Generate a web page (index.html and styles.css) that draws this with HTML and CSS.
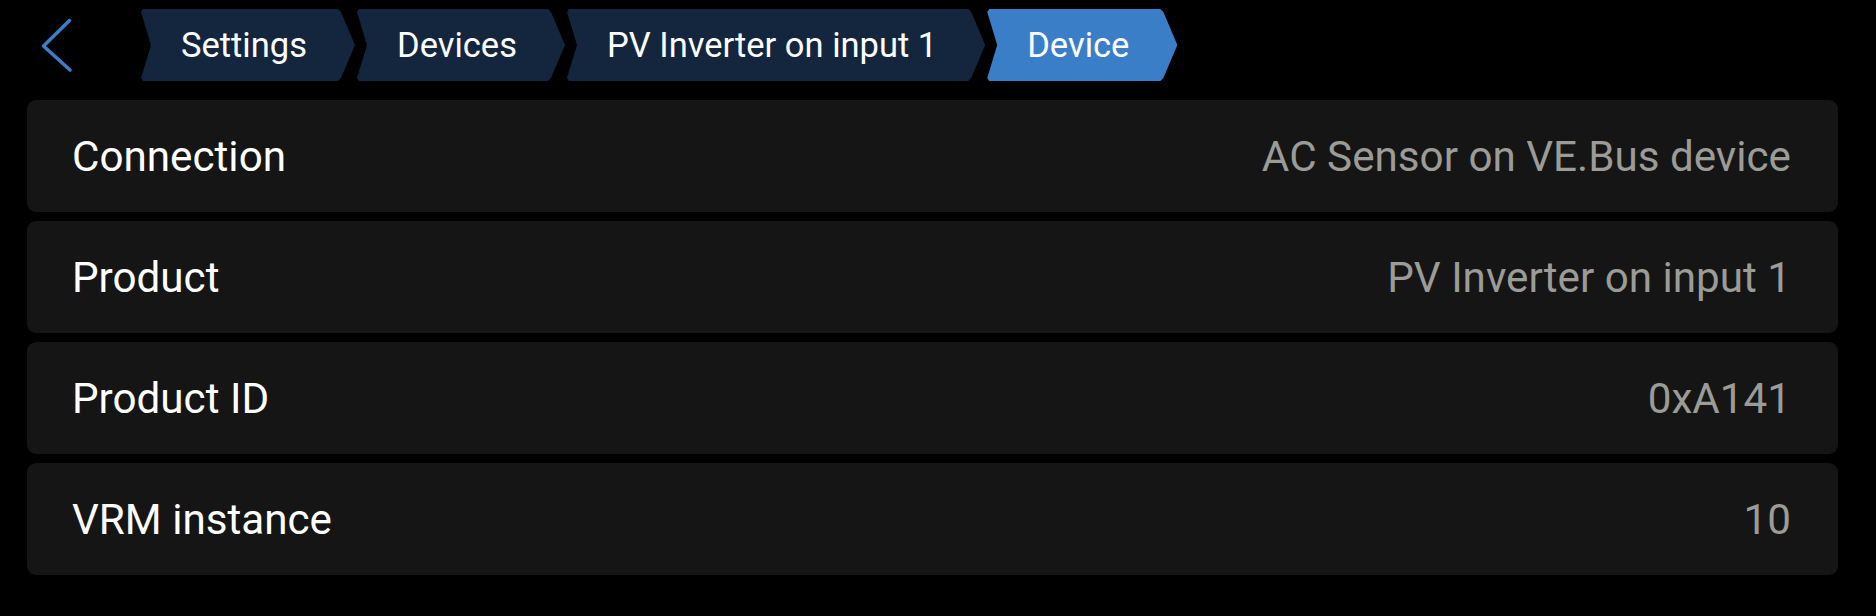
FILE: index.html
```html
<!DOCTYPE html>
<html>
  <head>
    <meta http-equiv="content-type" content="text/html; charset=utf-8" />
    <meta name="viewport" content="width=device-width, initial-scale=1.0">
    <title>Device</title>
    <link rel="stylesheet" href="styles.css">
  </head>
  <body>
    <div class="top_bar">
      <div class="back_btn">
        <svg width="34" height="58" viewBox="0 0 34 58">
          <polyline points="29.5,4.5 3.5,30 30,54" fill="none" stroke="#3a7fca" stroke-width="3.5" stroke-linecap="round" stroke-linejoin="round" />
        </svg>
      </div>
      <div class="crumbs">
        <div class="crumb">Settings</div>
        <div class="crumb">Devices</div>
        <div class="crumb">PV Inverter on input 1</div>
        <div class="crumb crumb_active">Device</div>
      </div>
    </div>

    <div class="list">
      <div class="row">
        <span class="row_label">Connection</span>
        <span class="row_value">AC Sensor on VE.Bus device</span>
      </div>
      <div class="row">
        <span class="row_label">Product</span>
        <span class="row_value">PV Inverter on input 1</span>
      </div>
      <div class="row">
        <span class="row_label">Product ID</span>
        <span class="row_value">0xA141</span>
      </div>
      <div class="row">
        <span class="row_label">VRM instance</span>
        <span class="row_value">10</span>
      </div>
    </div>
  </body>
</html>
```

FILE: styles.css
```css
body, html {
  margin: 0;
  padding: 0;
  height: 100%;
}

body {
  background: #000;
  font-family: Roboto, "Liberation Sans", sans-serif;
  color: #fff;
}

.top_bar {
  display: flex;
  align-items: center;
  height: 72px;
  margin: 9px 0 0 0;
  padding: 0 0 0 27px;
}

.back_btn {
  width: 100px;
  padding: 0 0 0 13px;
  display: flex;
  align-items: center;
}

.back_btn svg {
  display: block;
}

.crumbs {
  display: flex;
  gap: 1px;
  height: 72px;
}

.crumb {
  display: flex;
  align-items: center;
  height: 72px;
  padding: 0 48px 0 41px;
  background: #13263d;
  font-size: 34.5px;
  color: #fff;
  clip-path: polygon(3px 0, calc(100% - 17px) 0, calc(100% - 14px) 3px, 100% 50%, calc(100% - 14px) calc(100% - 3px), calc(100% - 17px) 100%, 3px 100%, 1px calc(100% - 3px), 11px 50%, 1px 3px);
}

.crumb_active {
  background: #3a7ec8;
}

.list {
  display: flex;
  flex-direction: column;
  gap: 9px;
  margin: 19px 38px 0 27px;
}

.row {
  display: flex;
  align-items: center;
  justify-content: space-between;
  height: 112px;
  padding: 0 47px 0 45px;
  background: #151515;
  border-radius: 9px;
  font-size: 42.2px;
}

.row_label {
  color: #fff;
}

.row_value {
  color: #9b9b97;
}
```
